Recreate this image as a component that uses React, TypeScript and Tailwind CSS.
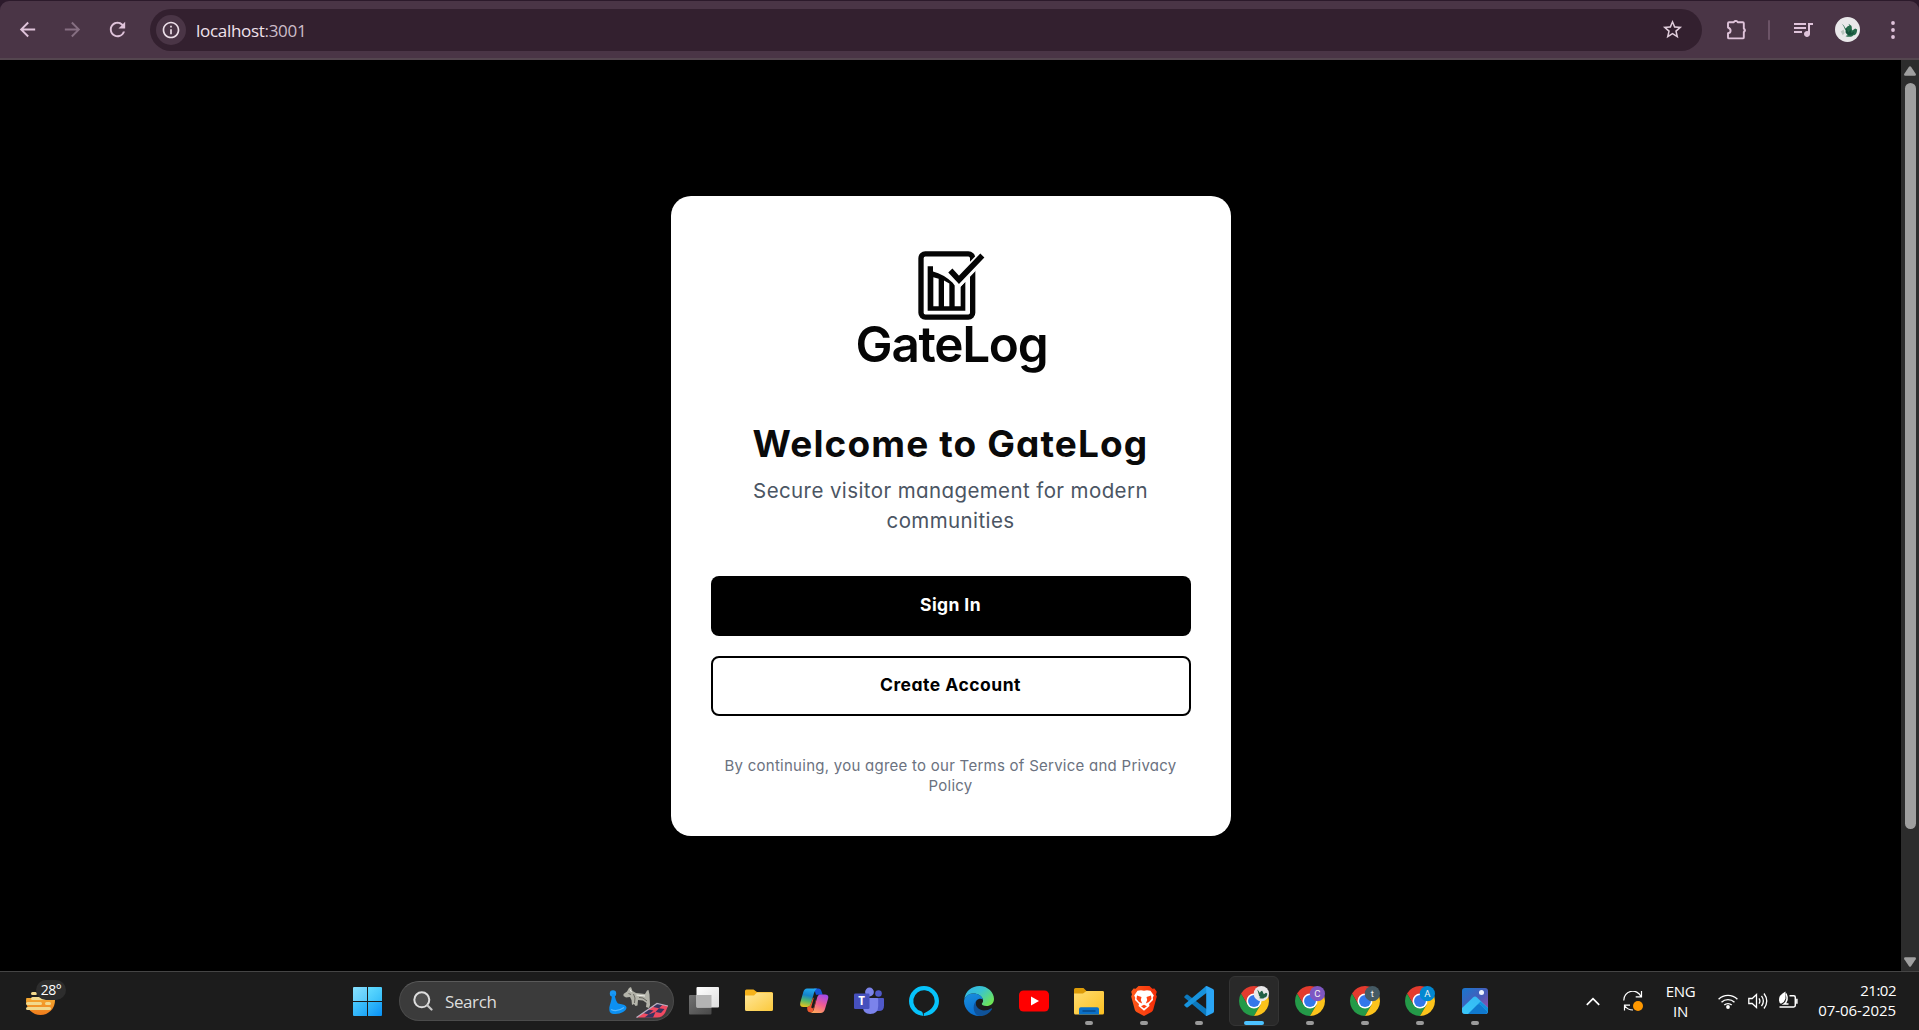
import type { ReactNode } from "react";
import { MdArrowBack, MdArrowForward, MdRefresh, MdOutlineInfo, MdStarOutline, MdQueueMusic } from "react-icons/md";

function Dragon({ className }: { className: string }) {
  return (
    <svg viewBox="0 0 26 26" className={className}>
      <circle cx="13" cy="13" r="13" fill="#e9e8ea" />
      <path d="M7 7c2 1 3 3 4 5 1-1 2-3 4-3l-1-2 3 2c1 2 0 3 1 5l3-2 2 1c0 3-1 6-4 6-1 2-5 2-8 1 1-1 2-1 3-1-2-1-3-3-3-5-1-2-2-5-4-7z" fill="#24694a" />
      <path d="M12 12l2 4 2-3 1 4 3-2-1 3-5 1-3-3z" fill="#14503a" />
      <path d="M6 15l3-2 1 4-2 2z" fill="#b9c4be" />
    </svg>
  );
}

function BrowserBar() {
  return (
    <header className="h-[60px] shrink-0 bg-[#2c1a2b] pt-px">
      <div className="flex h-[59px] items-center rounded-t-[9px] border-b-2 border-[#54464f] bg-[#4a3546] text-[#dfc3da]">
        <MdArrowBack className="ml-4 size-[23px]" />
        <MdArrowForward className="ml-[22px] size-[23px] text-[#866f82]" />
        <MdRefresh className="ml-[22px] size-[23px]" />
        <div className="ml-[21px] flex h-[42px] w-[1552px] items-center rounded-full bg-[#33202f]">
          <div className="ml-1.5 flex size-[30px] items-center justify-center rounded-full bg-[#4a3546] text-[#ecdfe8]">
            <MdOutlineInfo className="size-5" />
          </div>
          <span className="mt-px ml-[10px] text-[17px] leading-none tracking-[-0.3px] text-[#f0e3ec]">
            localhost<span className="text-[#cdbdc9]">:3001</span>
          </span>
          <MdStarOutline className="mr-[18px] ml-auto size-[23px] text-[#e0cddb]" />
        </div>
        <svg viewBox="0 0 22 22" className="ml-6 size-[22px]" fill="none" stroke="currentColor" strokeWidth="1.9" strokeLinejoin="round">
          <path d="M2 4.200q0-1 1-1h4.800a2.100 2.100 0 0 1 3.900 0h5.100q1 0 1 1v5.300a2.100 2.100 0 0 1 0 3.600v5.300q0 1-1 1H3q-1 0-1-1v-4.200q2.600-.3 2.600-2.500T2 8.500z" />
          <path d="M7.600 3a2.200 2.200 0 0 1 4.300 0zM17.800 9.200a2.200 2.200 0 0 1 0 4.300z" fill="currentColor" stroke="none" />
        </svg>
        <div className="ml-5 h-5 w-0.5 rounded bg-[#6c5467]" />
        <MdQueueMusic className="mb-0.5 ml-[21px] size-6" />
        <Dragon className="ml-5 size-[25px]" />
        <svg viewBox="0 0 6 20" className="ml-[30px] h-5 w-1.5" fill="currentColor">
          <circle cx="3" cy="3" r="1.9" />
          <circle cx="3" cy="10" r="1.9" />
          <circle cx="3" cy="17" r="1.9" />
        </svg>
      </div>
    </header>
  );
}

function GateLogo() {
  return (
    <div className="flex flex-col items-center pl-0.5">
      <svg viewBox="290 60 210 215" className="h-[72px] w-[70px]" fill="none" stroke="#050505">
        <rect x="305" y="71" width="155" height="190" rx="13" strokeWidth="16" />
        <path d="M325 108h16v16q32 8 59 34l6 8v62h18v-58l14-15v87H325z" fill="#050505" stroke="none" />
        <path d="M342 141l16 5v82h-16zM374 151l16 9v68h-16z" fill="#fff" stroke="none" />
        <path d="M386 119l33 33 78-82" stroke="#fff" strokeWidth="31" />
        <path d="M393 121l26 28 70-73" strokeWidth="17" />
      </svg>
      <div className="-mt-[3px] h-[50px] font-[Inter,sans-serif] text-[49.5px] leading-[50px] font-semibold tracking-[-1.3px] text-[#050505] [font-feature-settings:normal]">GateLog</div>
    </div>
  );
}

function WelcomeCard() {
  return (
    <section className="mt-[136px] flex h-[640px] w-[560px] flex-col items-center rounded-[20px] bg-white px-10 pt-[54px] text-center font-[Inter,sans-serif] [font-feature-settings:'cv11']">
      <GateLogo />
      <h1 className="mt-[52px] text-[37px] leading-[45px] font-bold tracking-[1.12px] whitespace-nowrap text-[#0a0a0a]">Welcome to GateLog</h1>
      <p className="mt-[10px] text-[20.5px] leading-[30px] tracking-[0.4px] text-[#4b5563]">
        Secure visitor management for modern
        <br />
        communities
      </p>
      <button className="mt-10 h-[60px] w-full rounded-lg bg-black pb-px text-[17.5px] font-bold tracking-[0.4px] text-white">Sign In</button>
      <button className="mt-5 h-[60px] w-full rounded-lg border-2 border-black pb-px text-[17.5px] font-bold tracking-[0.5px] text-black">Create Account</button>
      <p className="mt-10 text-[15px] leading-5 tracking-[0.26px] text-[#6b7280]">
        By continuing, you agree to our Terms of Service and Privacy
        <br />
        Policy
      </p>
    </section>
  );
}

function Scrollbar() {
  return (
    <div className="flex w-[18px] shrink-0 flex-col items-center bg-[#2c2c2c] pt-1.5 pb-1">
      <svg viewBox="0 0 12 10" className="h-2.5 w-3" fill="#9f9f9f"><path d="M5 .8q1-1.200 2 0l4.700 7q.8 2-1 2H1.300q-1.800 0-1-2z" /></svg>
      <div className="mt-[7px] h-[746px] w-[11px] rounded-full bg-[#9f9f9f]" />
      <svg viewBox="0 0 12 10" className="mt-auto h-2.5 w-3" fill="#9f9f9f"><path d="M5 9.200q1 1.200 2 0l4.700-7q.8-2-1-2H1.300q-1.800 0-1 2z" /></svg>
    </div>
  );
}

function AppCell({ children, state }: { children: ReactNode; state?: "open" | "active" }) {
  return (
    <div className="relative flex h-[58px] w-[55.1px] shrink-0 items-center justify-center">
      {state === "active" && <div className="absolute top-1 h-[50px] w-[50px] rounded-md border border-[#343434] bg-[#292929]" />}
      <div className="relative flex size-[30px] items-center justify-center">{children}</div>
      {state === "open" && <div className="absolute bottom-[5px] h-1 w-2 rounded-full bg-[#9a9a9a]" />}
      {state === "active" && <div className="absolute bottom-[5px] h-1 w-5 rounded-full bg-[#4cc2ff]" />}
    </div>
  );
}

function TaskView() {
  return (
    <svg viewBox="0 0 30 30" className="size-[30px]">
      <defs>
        <linearGradient id="tvf" x1="0" y1="0" x2="1" y2="1"><stop stopColor="#fff" /><stop offset="1" stopColor="#dedede" /></linearGradient>
        <linearGradient id="tvb" x1="0" y1="0" x2="1" y2="1"><stop stopColor="#727272" /><stop offset="1" stopColor="#484848" /></linearGradient>
      </defs>
      <rect x="0" y="9" width="22.5" height="19.5" rx="1" fill="url(#tvb)" />
      <rect x="7.5" y="1" width="22.5" height="20.5" rx="1" fill="url(#tvf)" />
      <path d="M7.500 9h15v12.500h-15z" fill="#b4b4b4" />
    </svg>
  );
}

function Folder() {
  return (
    <svg viewBox="0 0 30 30" className="size-[30px]">
      <defs><linearGradient id="fld" x1="0" y1="0" x2="1" y2="1"><stop stopColor="#ffe79b" /><stop offset="1" stopColor="#fbc93c" /></linearGradient></defs>
      <path d="M1 5q0-1.500 1.500-1.500h7L13 6h14.500Q29 6 29 7.500V12H1z" fill="#f5b21b" />
      <path d="M1 9.500h9L13 6.500h14.500Q29 6.500 29 8v15.500q0 1.500-1.500 1.500h-25Q1 25 1 23.500z" fill="url(#fld)" />
    </svg>
  );
}

function Copilot() {
  return (
    <svg viewBox="0 0 30 30" className="size-[30px]">
      <defs>
        <linearGradient id="cp1" x1=".4" y1="0" x2=".2" y2="1"><stop stopColor="#20a7ee" /><stop offset=".35" stopColor="#1583c9" /><stop offset=".65" stopColor="#53b86a" /><stop offset="1" stopColor="#f0c41a" /></linearGradient>
        <linearGradient id="cp2" x1=".7" y1="0" x2=".3" y2="1"><stop stopColor="#a549e8" /><stop offset=".5" stopColor="#ef5c93" /><stop offset="1" stopColor="#ffa45b" /></linearGradient>
      </defs>
      <path d="M15 2.500h4.500q2 0 2.700 2l1.500 4.300H17z" fill="#1554d8" />
      <path d="M8 2.500h10q-2 1-3 4.500l-3 10.500Q11 21 8 21H4.500Q.3 21 1.300 16.500l3-10.500Q5.300 2.500 8 2.500z" fill="url(#cp1)" />
      <path d="M8 21.500q3-1 4-4l2-6 3 3-3.500 12H12q-3 0-3.500-2z" fill="#ee5a30" />
      <path d="M21 8.500h5q4.300 0 3 4.500l-3 10Q25 27 21.500 27H11.500q2.500-.5 3.500-4l3-11q1-3.500 3-3.500z" fill="url(#cp2)" />
      <path d="M16.200 11.500l-2.600 9.500" stroke="#1c1c1c" strokeWidth="2.600" strokeLinecap="round" />
    </svg>
  );
}

function Teams() {
  return (
    <svg viewBox="0 0 30 30" className="size-[30px]">
      <circle cx="24.5" cy="7.5" r="3.3" fill="#5059c9" />
      <path d="M20 12h9q1 0 1 1v6.500q0 5.500-5 5.500h-5z" fill="#5059c9" />
      <circle cx="15.5" cy="6" r="4.4" fill="#7b83eb" />
      <path d="M9 12h14q1.200 0 1.200 1.200V20q0 8-8 8-7.200 0-7.200-7z" fill="#7b83eb" />
      <rect x="0" y="7.5" width="15.5" height="15.5" rx="1.3" fill="#4650bd" />
      <text x="7.7" y="19.3" textAnchor="middle" fontFamily="Open Sans, sans-serif" fontWeight="700" fontSize="11.5" fill="#fff">T</text>
    </svg>
  );
}

function Alexa() {
  return (
    <svg viewBox="0 0 30 30" className="size-[30px]">
      <path fillRule="evenodd" d="M15 0a15 15 0 0 1 0 30q-1-.3-1-1.500 0-2.500-1.700-3.200A10.700 10.700 0 1 1 25.700 15c0 5.500-4.500 9.500-11 12.500L15 30A15 15 0 1 1 15 0z" fill="#06c3fb" />
    </svg>
  );
}

function Edge() {
  return (
    <svg viewBox="0 0 30 30" className="size-[30px]">
      <defs>
        <linearGradient id="eg1" x1="0" y1="0" x2="1" y2=".7"><stop stopColor="#2fb4ee" /><stop offset=".5" stopColor="#3ac4cf" /><stop offset="1" stopColor="#6ee556" /></linearGradient>
        <linearGradient id="eg2" x1="0" y1="0" x2=".3" y2="1"><stop stopColor="#198fdd" /><stop offset="1" stopColor="#0a6fd0" /></linearGradient>
      </defs>
      <path d="M.3 13C1.500 5 8 0 15.300 0 24 0 30 6.500 30 13c0 4.500-3.500 7-7.500 7-3.300 0-5-1.200-4.700-2.300 1-1.300 1.500-2.200 1.200-4C18 10 14 7.500 9.500 7.500 5.500 7.500 2 9.500.3 13z" fill="url(#eg1)" />
      <path d="M0 15C.5 10.500 4.500 7.500 9.500 7.500c5 0 8.500 2.500 9.500 6-1.500-1.500-5-1-6.500 1C10 18 12 26 19 29.500 9 32 0 24.500 0 15z" fill="url(#eg2)" />
      <path d="M12.500 14.500C10 19 14 24.500 20 24.500c3 0 5-.8 7-2 .8-.4 1.300.2.800 1C25 28 20 30.300 15.500 30 9.500 29 7.500 19 12.500 14.500z" fill="#0f5299" />
    </svg>
  );
}

function YouTube() {
  return (
    <svg viewBox="0 0 30 30" className="size-[30px]">
      <rect x="0" y="4.5" width="30" height="21" rx="4.5" fill="#f00" />
      <path d="M12 10.500l8 4.500-8 4.500z" fill="#fff" />
    </svg>
  );
}

function Explorer() {
  return (
    <svg viewBox="0 0 30 30" className="size-[30px]">
      <defs><linearGradient id="exf" x1="0" y1="0" x2="1" y2="1"><stop stopColor="#ffdc70" /><stop offset="1" stopColor="#fcc021" /></linearGradient></defs>
      <path d="M0 3.500Q0 2 1.500 2h8L12.500 5H28.500Q30 5 30 6.500V12H0z" fill="#dc9b08" />
      <path d="M0 7.500h9l3.500-2.500h16Q30 5 30 6.500V27q0 1.500-1.500 1.500h-27Q0 28.500 0 27z" fill="url(#exf)" />
      <path d="M5 28.500V23q0-1.800 1.800-1.800h16.400Q25 21.200 25 23v5.500z" fill="#0a70c8" />
      <path d="M8.500 25h13" stroke="#053f78" strokeWidth="1.2" />
    </svg>
  );
}

function Brave() {
  return (
    <svg viewBox="0 0 30 30" className="size-[30px]">
      <defs><linearGradient id="brv"><stop stopColor="#ff5a1a" /><stop offset="1" stopColor="#f52c08" /></linearGradient></defs>
      <path d="M9.500 0h11l2.800 2.800 2.200-.3 2.300 3.200-.8 2.800.8 2-3.600 13.300q-.4 1.300-1.700 2.200L15 30l-7.500-4q-1.300-.9-1.700-2.200L2.200 10.500l.8-2-.8-2.800 2.300-3.200 2.200.3z" fill="url(#brv)" />
      <path d="M15 4.800l3-.5 3.500.5 3.300 4.700-1 2 .2 2.500-4 4 .5 2-5.500 4.800L9.500 20l.5-2-4-4 .2-2.500-1-2 3.300-4.700 3.500-.5z" fill="#fff" />
      <path d="M8 9.500l4.500 1.500-.7 3 1.400 3.500L10 16l-2.500-3zM22 9.500L17.500 11l.7 3-1.400 3.500L20 16l2.500-3zM12 20.300l3-1.500 3 1.500-3 2.200z" fill="#ff4213" />
    </svg>
  );
}

function VSCode() {
  return (
    <svg viewBox="0 0 30 30" className="size-[30px]">
      <path d="M.6 10.200l1.600-1.500q.8-.6 1.600 0L23 23.500V30q-1 0-1.700-.7L.6 11.800q-.8-.8 0-1.600z" fill="#0c79be" />
      <path d="M.6 19.800l1.600 1.500q.8.600 1.600 0L23 6.500V0q-1 0-1.700.7L.6 18.200q-.8.800 0 1.600z" fill="#1793dd" />
      <path d="M21.300.7Q22 0 23.300.3L29 3q1 .5 1 1.700v20.600q0 1.200-1 1.700l-5.700 2.700q-1.200.5-2-.4.9.5.9-1V1.700q0-1.500-.9-1z" fill="#2aa5f5" />
    </svg>
  );
}

function Chrome({ badge, color }: { badge?: string; color?: string }) {
  return (
    <svg viewBox="2 2 44 44" className="size-[30px] overflow-visible">
      <path d="M4.950 13A22 22 0 0 1 43.050 13H24L14.470 29.500z" fill="#e33b2e" />
      <path d="M24 46A22 22 0 0 1 4.950 13l9.520 16.500h19.060z" fill="#249a48" />
      <path d="M43.050 13A22 22 0 0 1 24 46l9.530-16.500L24 13z" fill="#fcc31b" />
      <circle cx="24" cy="24" r="11" fill="#fff" />
      <circle cx="24" cy="24" r="8.7" fill="#3377ea" />
      {badge ? (
        <>
          <circle cx="34.8" cy="13.2" r="11.2" fill={color} />
          <text x="34.8" y="18.2" textAnchor="middle" fontFamily="Roboto, sans-serif" fontSize="14" fill="#f3f3f3">{badge}</text>
        </>
      ) : (
        <>
          <circle cx="34.8" cy="13.2" r="11.2" fill="#e9e8ea" />
          <path d="M28.500 7c2 1 3 3 4 5 1-1 1.500-3 3.500-3l2.500 5 3-2 2 1c0 3-1 6-4 6-1 2-5 1.500-8 .5l2-1.500c-2-1-2.500-2-2.500-4-1-2-1-5-2.500-7z" fill="#1f5f45" />
        </>
      )}
    </svg>
  );
}

function Photos() {
  return (
    <svg viewBox="0 0 30 30" className="size-[30px]">
      <defs>
        <linearGradient id="ph1" x1="0" y1="0" x2="1" y2="1"><stop stopColor="#1777cf" /><stop offset=".55" stopColor="#4a5bb8" /><stop offset="1" stopColor="#a34da6" /></linearGradient>
        <linearGradient id="ph2" x1="0" y1="1" x2="1" y2="0"><stop stopColor="#38c8fa" /><stop offset="1" stopColor="#35b6f2" /></linearGradient>
        <clipPath id="phc"><rect x="2" y="2" width="26" height="26" rx="3" /></clipPath>
      </defs>
      <g clipPath="url(#phc)">
        <path d="M2 2h26v26H2z" fill="url(#ph1)" />
        <path d="M2 22L13 11.500q2-1.800 4 0L29 23v6H2z" fill="url(#ph2)" />
        <path d="M8 28l9-9q2-2 4 0l8 8v2H8z" fill="#1079ce" />
        <path d="M17 19l3.500-3.500L29 23v4l-8-8q-2-2-4 0z" fill="#0f8fdd" />
        <circle cx="21.500" cy="6.500" r="2.500" fill="#eef3ff" />
      </g>
    </svg>
  );
}

function Weather() {
  return (
    <div className="relative h-[35px] w-10">
      <svg viewBox="0 0 30 24" className="absolute top-[12px] left-0 h-6 w-[30px]">
        <defs><linearGradient id="wth" x1="0" y1="0" x2="0" y2="1"><stop stopColor="#f7c840" /><stop offset="1" stopColor="#f07c1c" /></linearGradient></defs>
        <circle cx="14.5" cy="8.5" r="14.5" fill="url(#wth)" />
        <path d="M0 0h30v6H0z" fill="#1c1c1c" />
        <path d="M6.500 1.500h3M6.500 6.500h12M1.500 11.500h13M20.500 11.500h3M1.500 16.500h22" stroke="#f2d98c" strokeWidth="3" strokeLinecap="round" />
      </svg>
      <div className="absolute top-0 left-2.5 flex h-5 w-[30px] items-center justify-center rounded-full bg-[#2d2d2d] text-[14px] leading-none tracking-[-0.5px] text-white">28°</div>
    </div>
  );
}

function GamePieces() {
  return (
    <svg viewBox="0 0 60 34" className="h-[34px] w-[60px]">
      <path d="M27.500 32.500L48 18.500L59 21L56 28Q53 32.500 48 32.500Z" fill="#f04a62" />
      <path d="M34 28L39 24.500L44.500 25.500L39.500 29.500ZM44 22L48 18.500L53.500 19.800L50 23.200ZM50 23.200L55.500 24L52 28L46.500 27ZM39.500 29.500L46.500 27L44 32.500L35.500 32.500Z" fill="#37345f" />
      <path d="M27.500 32.500L48 18.500L59 21" stroke="#b9b0c0" strokeWidth="1.2" fill="none" />
      <circle cx="4" cy="8.5" r="3.2" fill="#1998f5" />
      <path d="M3 9H5.500Q6.500 16 9 18.500Q17.500 19.500 17.500 22.500C17.500 26 12 29 6.500 29S.3 27 .3 23.500S2.700 17 3 9Z" fill="#0c90f2" />
      <path d="M2 24.500Q8 27.500 15 22.500" stroke="#55b8ff" strokeWidth="1.2" fill="none" />
      <path d="M14.500 9L18 6.500L20 3L22 2L23.500 6L27 8L36 9L38 5.500L39.500 5L40.500 9.500L41 20L40 23L37 22L37.500 18L34 15.500L29 15L28.500 20.500L26.500 21L25 19L23 20L22.500 15L21 12L17 12.500L14.500 11Z" fill="#b4b4aa" />
      <path d="M19.500 8.500L22 9.500M24.500 9L26 13L25.500 18M30 12.500L34 13L38 16" stroke="#686760" fill="none" />
      <path d="M21 4.500L22.500 7M27.500 10L36 11" stroke="#f0f0ea" fill="none" />
    </svg>
  );
}

function Taskbar() {
  return (
    <footer className="flex h-[59px] shrink-0 items-center border-t border-[#454545] bg-[#1c1c1c] text-white">
      <div className="flex h-full w-[353px] pt-2 pl-[26px]">
        <Weather />
      </div>
      <div className="grid size-[29px] grid-cols-2 gap-px">
        <div className="rounded-tl-[1px] bg-linear-to-br from-[#86e1ff] to-[#58c9fb]" />
        <div className="rounded-tr-[1px] bg-linear-to-br from-[#62dcff] to-[#33bdf9]" />
        <div className="rounded-bl-[1px] bg-linear-to-br from-[#49c9fd] to-[#1ba4f6]" />
        <div className="rounded-br-[1px] bg-linear-to-br from-[#36bdfb] to-[#0591f5]" />
      </div>
      <div className="ml-[17px] flex h-10 w-[275px] items-center rounded-full border border-[#4b4b4b] border-t-[#5a5a5a] bg-[#3b3b3b]">
        <svg viewBox="0 0 20 20" className="ml-[13px] size-5" fill="none" strokeLinecap="round">
          <circle cx="8.8" cy="8.8" r="7.5" stroke="#dedede" strokeWidth="2" fill="#505050" />
          <path d="M14.500 14.500l4 4" stroke="#c9c9c9" strokeWidth="2.2" />
        </svg>
        <span className="ml-[12px] text-[17px] leading-none tracking-[-0.4px] text-[#dedede]">Search</span>
        <div className="mt-0.5 mr-1 ml-auto"><GamePieces /></div>
      </div>
      <nav className="ml-[2px] flex">
        <AppCell><TaskView /></AppCell>
        <AppCell><Folder /></AppCell>
        <AppCell><Copilot /></AppCell>
        <AppCell><Teams /></AppCell>
        <AppCell><Alexa /></AppCell>
        <AppCell><Edge /></AppCell>
        <AppCell><YouTube /></AppCell>
        <AppCell state="open"><Explorer /></AppCell>
        <AppCell state="open"><Brave /></AppCell>
        <AppCell state="open"><VSCode /></AppCell>
        <AppCell state="active"><Chrome /></AppCell>
        <AppCell state="open"><Chrome badge="C" color="#7e57c2" /></AppCell>
        <AppCell state="open"><Chrome badge="t" color="#455a64" /></AppCell>
        <AppCell state="open"><Chrome badge="A" color="#0288d1" /></AppCell>
        <AppCell state="open"><Photos /></AppCell>
      </nav>
      <div className="mr-[23px] ml-auto flex items-center">
        <svg viewBox="0 0 14 9" className="h-[9px] w-3.5" fill="none" stroke="#fff" strokeWidth="1.7"><path d="M.8 7.800L7 1.600l6.200 6.200" /></svg>
        <svg viewBox="0 0 20 20" className="ml-[23px] size-5" fill="none" stroke="#fff" strokeWidth="1.2">
          <path d="M.8 9.500A9 9 0 0 1 18 5.500M18.500 0v5.800h-5.800M1.500 19.500v-5.300h5.500M1.500 14.500Q4.500 19 10 19" />
          <circle cx="15" cy="15" r="5" fill="#ff9800" stroke="none" />
        </svg>
        <div className="-mt-px ml-[22px] w-[31px] text-center text-[15px] leading-5 tracking-[-0.3px]">
          ENG
          <br />
          IN
        </div>
        <svg viewBox="0 0 20 16" className="ml-[22px] h-4 w-5" fill="none" stroke="#fff" strokeWidth="1.4">
          <path d="M.6 6.300a13.300 13.300 0 0 1 18.800 0M3.500 9.300a9.200 9.200 0 0 1 13 0M6.300 12.100a5.300 5.300 0 0 1 7.400 0" />
          <circle cx="10" cy="14" r="1.9" fill="#fff" stroke="none" />
        </svg>
        <svg viewBox="0 0 20 18" className="ml-2.5 h-[18px] w-5" fill="none" stroke="#fff" strokeWidth="1.3">
          <path d="M.8 6.500h3.400l4.300-4v13l-4.300-4H.8zM11 6.300q1.800 2.700 0 5.400M13.500 3.800q3.700 5.200 0 10.400M16 1.500q5.500 7.500 0 15" />
        </svg>
        <svg viewBox="0 0 20 18" className="mb-0.5 ml-2.5 h-[18px] w-5" fill="none" stroke="#fff" strokeWidth="1.5">
          <path d="M11.500 4.700h4.200q1.600 0 1.600 1.600v8q0 1.600-1.600 1.600H1.500M18.900 7.800v5" />
          <path d="M7.500.5q-7 3.500-6.500 9Q1.200 12 3 12.700q3.500-1.500 4.500-5z" fill="#fff" stroke="none" />
          <path d="M8 2.500q3 7-2 10.500h4.500" />
        </svg>
        <div className="-mt-0.5 ml-[18px] w-20 text-right text-[15px] leading-5 tracking-[-0.05px] whitespace-nowrap">
          <span className="tracking-[-0.5px]">21:02</span>
          <br />
          07-06-2025
        </div>
      </div>
    </footer>
  );
}

export default function App() {
  return (
    <div className="flex h-[1030px] w-[1919px] flex-col overflow-hidden bg-black font-['Open_Sans',sans-serif]">
      <BrowserBar />
      <div className="flex min-h-0 flex-1">
        <main className="flex flex-1 items-start justify-center bg-black">
          <WelcomeCard />
        </main>
        <Scrollbar />
      </div>
      <Taskbar />
    </div>
  );
}
